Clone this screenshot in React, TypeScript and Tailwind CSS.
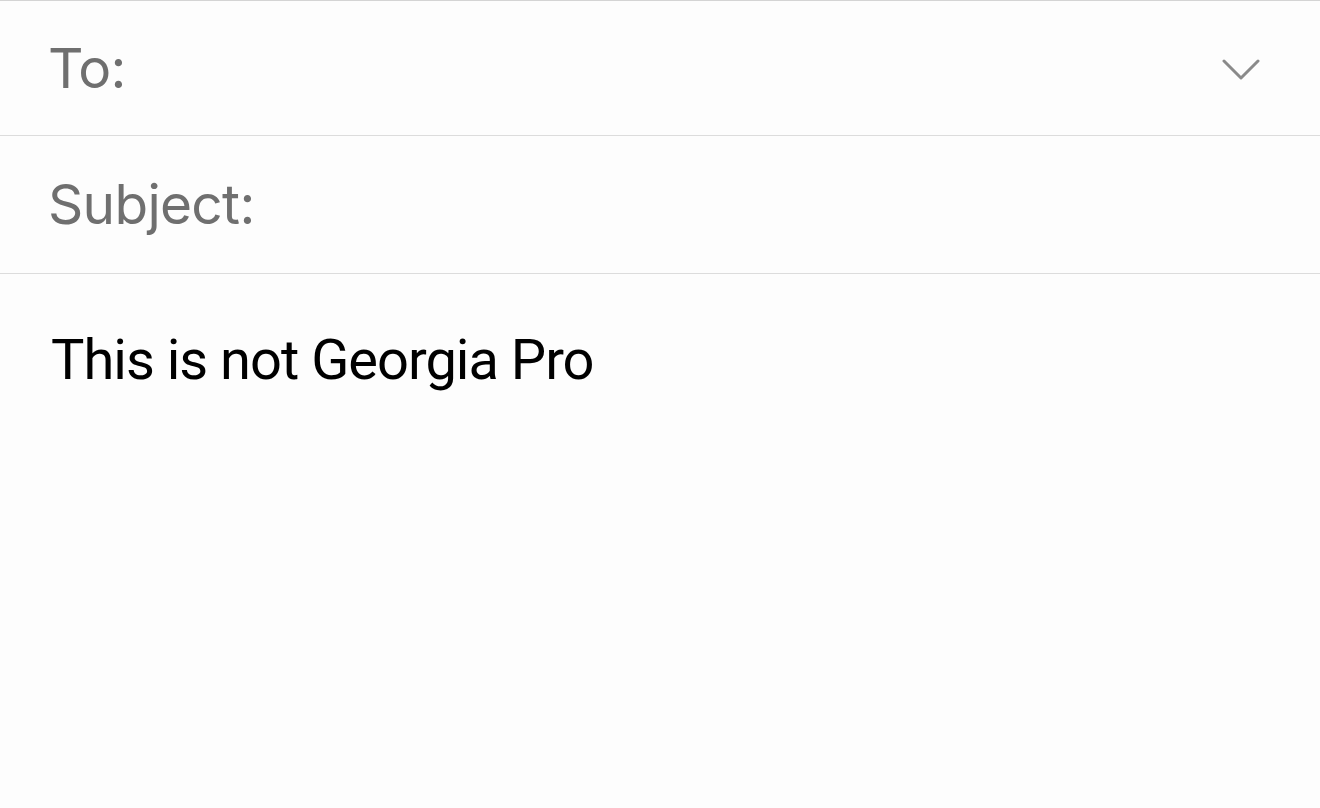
import React from 'react';

export default function App() {
    return (
        <div className="min-h-[808px] w-full bg-[#fdfdfd] font-['Inter',sans-serif]">
            <div className="border-t border-[#d4d4d4]">
                {/* To row */}
                <div className="flex h-[135px] items-center justify-between border-b border-[#dcdcdc] pl-[48px] pr-[58px]">
                    <span className="text-[55px] leading-none tracking-[-0.9px] text-[#6f6f6f]">To:</span>
                    <svg width="40" height="24" viewBox="0 0 40 24" fill="none" className="mt-[4px]">
                        <path d="M2 3 L19 20 L36 3" stroke="#8a8a8a" strokeWidth="3" strokeLinecap="round" strokeLinejoin="round" />
                    </svg>
                </div>

                {/* Subject row */}
                <div className="flex h-[138px] items-center border-b border-[#dcdcdc] pl-[48px]">
                    <span className="text-[55px] leading-none tracking-[-0.7px] text-[#6f6f6f]">Subject:</span>
                </div>
            </div>

            {/* Body */}
            <div className="pl-[51px] pt-[58px]">
                <p className="font-['Roboto',sans-serif] text-[56px] leading-none tracking-[-1px] text-black">This is not Georgia Pro</p>
            </div>
        </div>
    );
}
